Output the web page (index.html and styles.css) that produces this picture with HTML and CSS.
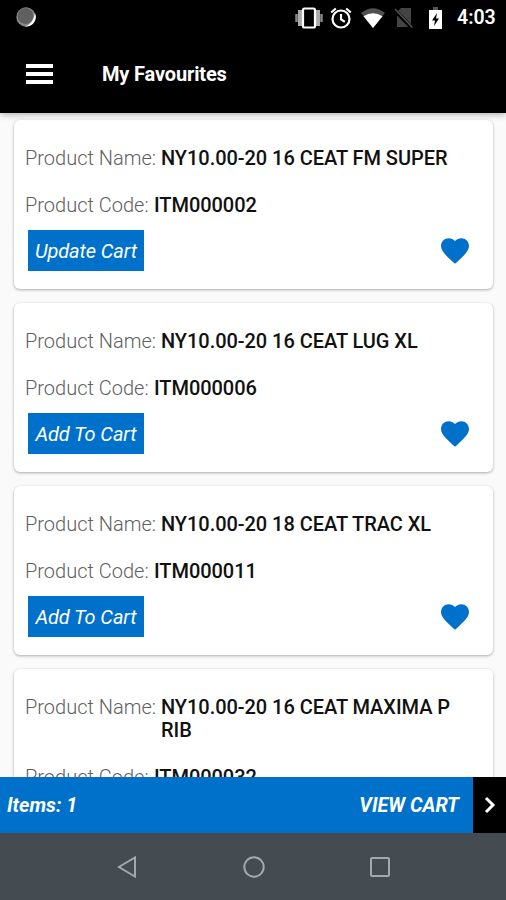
FILE: index.html
```html
<!DOCTYPE html>
<html lang="en">
<head>
<meta charset="utf-8">
<title>My Favourites</title>
<link rel="stylesheet" href="styles.css">
</head>
<body>
<div class="screen">
  <header class="top">
    <div class="status">
      <svg class="sync" width="20" height="20" viewBox="0 0 20 20"><circle cx="10" cy="10" r="9.700" fill="#888"/><path d="M19 6a9.700 9.700 0 0 1-10 13.500Q17 17 19 6z" fill="#fff"/><circle cx="9.500" cy="9" r="7.900" fill="#606060"/></svg>
      <svg class="vibrate" width="28" height="22" viewBox="0 0 28 22"><path d="M1.500 7v8M26.500 7v8" stroke="#888" stroke-width="2.500"/><path d="M5 3v16M23 3v16" stroke="#aaa" stroke-width="4"/><rect x="8" y="1.500" width="12" height="19" rx="1.500" fill="#000" stroke="#fff" stroke-width="2.200"/></svg>
      <svg class="alarm" width="22" height="22" viewBox="0 0 22 22" fill="none" stroke="#fff" stroke-width="2.200"><circle cx="11" cy="12" r="8.500"/><path d="M11 7v5.500l3.800 2.300M1.200 5.500l4.600-4M20.800 5.500l-4.600-4"/></svg>
      <svg class="wifi" width="24" height="20" viewBox="0 0 24 20"><path d="M0 5Q12-4.500 24 5L12 20z" fill="#505050"/><path d="M2.500 8.300q9.500-6 19 0L12 20z" fill="#fff"/></svg>
      <svg class="nosim" width="20" height="22" viewBox="0 0 20 22"><path d="M7 1h10v19H3V5z" fill="#444"/><path d="M0 2.500L18 21" stroke="#000" stroke-width="4"/><path d="M1 2l17.500 18.500" stroke="#555" stroke-width="1.500"/></svg>
      <svg class="battery" width="13" height="22" viewBox="0 0 13 22"><path d="M4 0h5v3H4z" fill="#555"/><path d="M0 3h13v19H0z" fill="#fff"/><path d="M8 6L3 13.500h3L5 19l5-7.500H7z" fill="#000"/></svg>
      <span class="clock">4:03</span>
    </div>
    <div class="appbar">
      <div class="menu"><i></i><i></i><i></i></div>
      <h1>My Favourites</h1>
    </div>
  </header>
  <main class="list">
    <article class="card">
      <div class="row"><span class="label name">Product Name:</span><b>NY10.00-20 16 CEAT FM SUPER</b></div>
      <div class="row"><span class="label code">Product Code:</span><b>ITM000002</b></div>
      <div class="actions"><button>Update Cart</button><svg class="heart" width="28" height="26" viewBox="2 3 20 18.350"><path d="m12 21.350-1.450-1.320C5.400 15.360 2 12.280 2 8.500 2 5.420 4.420 3 7.500 3c1.740 0 3.410.810 4.500 2.090C13.090 3.810 14.760 3 16.500 3 19.580 3 22 5.420 22 8.500c0 3.780-3.400 6.860-8.550 11.540z"/></svg></div>
    </article>
    <article class="card">
      <div class="row"><span class="label name">Product Name:</span><b>NY10.00-20 16 CEAT LUG XL</b></div>
      <div class="row"><span class="label code">Product Code:</span><b>ITM000006</b></div>
      <div class="actions"><button>Add To Cart</button><svg class="heart" width="28" height="26" viewBox="2 3 20 18.350"><path d="m12 21.350-1.450-1.320C5.400 15.360 2 12.280 2 8.500 2 5.420 4.420 3 7.500 3c1.740 0 3.410.810 4.500 2.090C13.090 3.810 14.760 3 16.500 3 19.580 3 22 5.420 22 8.500c0 3.780-3.400 6.860-8.550 11.540z"/></svg></div>
    </article>
    <article class="card">
      <div class="row"><span class="label name">Product Name:</span><b>NY10.00-20 18 CEAT TRAC XL</b></div>
      <div class="row"><span class="label code">Product Code:</span><b>ITM000011</b></div>
      <div class="actions"><button>Add To Cart</button><svg class="heart" width="28" height="26" viewBox="2 3 20 18.350"><path d="m12 21.350-1.450-1.320C5.400 15.360 2 12.280 2 8.500 2 5.420 4.420 3 7.500 3c1.740 0 3.410.810 4.500 2.090C13.090 3.810 14.760 3 16.500 3 19.580 3 22 5.420 22 8.500c0 3.780-3.400 6.860-8.550 11.540z"/></svg></div>
    </article>
    <article class="card">
      <div class="row"><span class="label name">Product Name:</span><b>NY10.00-20 16 CEAT MAXIMA P RIB</b></div>
      <div class="row"><span class="label code">Product Code:</span><b>ITM000032</b></div>
    </article>
  </main>
  <footer class="cart">
    <span class="items">Items: 1</span>
    <span class="view">VIEW CART</span>
    <div class="go"><svg width="12" height="18" viewBox="0 0 12 18"><path d="M2 2l7 7-7 7" fill="none" stroke="#fff" stroke-width="3"/></svg></div>
  </footer>
  <nav class="nav">
    <svg width="20" height="22" viewBox="0 0 20 22"><path d="M18 1.500v19L1.800 11z"/></svg>
    <svg width="22" height="22" viewBox="0 0 22 22"><circle cx="11" cy="11" r="9.700"/></svg>
    <svg width="20" height="20" viewBox="0 0 20 20"><rect x="1" y="1" width="18" height="18" rx="1"/></svg>
  </nav>
</div>
</body>
</html>
```

FILE: styles.css
```css
* { box-sizing: border-box; }
body { margin: 0; font-family: Roboto, "Liberation Sans", sans-serif; }
svg { display: block; flex: none; }
.screen { width: 506px; height: 900px; display: flex; flex-direction: column; overflow: hidden; background: #fafafa; }
.top { height: 113px; flex: none; background: #000; color: #fff; box-shadow: 0 1px 7px rgba(0,0,0,.35); z-index: 1; }
.status { height: 36px; display: flex; align-items: center; padding-left: 16px; }
.sync { margin-top: -2px; }
.vibrate { margin-left: 259px; }
.alarm { margin-left: 7px; margin-top: -1px; }
.wifi { margin-left: 9px; margin-top: -1px; }
.nosim { margin-left: 9px; margin-top: -1px; }
.battery { margin-left: 15px; }
.clock { margin-left: 15px; font-size: 19.5px; font-weight: 600; white-space: nowrap; margin-top: -1px; }
.appbar { height: 75px; display: flex; align-items: center; padding-left: 26px; }
.menu { width: 27px; height: 20px; display: flex; flex-direction: column; justify-content: space-between; }
.menu i { height: 4px; background: #fff; }
h1 { margin: 0 0 0 49px; font-size: 20px; line-height: 24px; font-weight: 700; letter-spacing: -.15px; white-space: nowrap; }
.list { flex: 1; min-height: 0; overflow: hidden; padding: 7px 13px 0 14px; display: flex; flex-direction: column; gap: 14px; }
.card { flex: none; min-height: 169px; background: #fff; border-radius: 6px; padding: 27px 11px 18px; box-shadow: 0 1px 3px rgba(0,0,0,.32); }
.row { display: flex; font-size: 20px; line-height: 23px; margin-bottom: 23.5px; }
.label { flex: none; font-weight: 300; color: #606060; white-space: nowrap; }
.name { width: 136px; }
.code { width: 129px; }
.row b { font-weight: 500; color: #111; max-width: 300px; letter-spacing: -.05px; }
.row + .row { margin-bottom: 13.5px; }
.actions { display: flex; align-items: center; justify-content: space-between; padding: 0 13px 0 3px; }
button { width: 116px; height: 41px; border: 0; border-radius: 0; padding: 0; background: #0071ca; color: #fff; font: italic 400 20px Roboto, sans-serif; letter-spacing: -.1px; white-space: nowrap; }
.heart { fill: #0071ca; }
.cart { height: 56px; flex: none; display: flex; align-items: center; background: #0071ca; color: #fff; font-size: 19.8px; font-style: italic; font-weight: 700; padding-left: 7px; }
.view { margin-left: auto; margin-right: 14px; }
.go { width: 33px; height: 56px; background: #000; display: flex; align-items: center; justify-content: center; }
.nav { height: 67px; flex: none; background: #454c51; display: flex; align-items: center; padding-left: 117px; gap: 105.5px; }
.nav svg { fill: none; stroke: #a4a8ab; stroke-width: 2; }
```
